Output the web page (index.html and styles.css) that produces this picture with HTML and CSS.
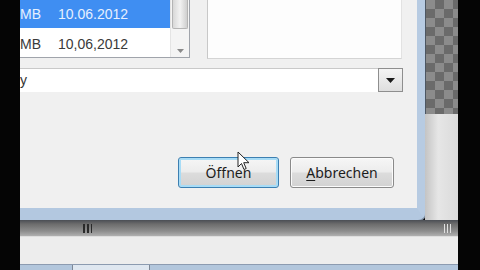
FILE: index.html
```html
<!DOCTYPE html>
<html lang="de">
<head>
    <meta charset="UTF-8">
    <title>Öffnen</title>
    <link rel="stylesheet" href="styles.css">
</head>
<body>
    <div class="edge-left"></div>
    <div class="screen">
        <div class="top">
            <div class="dialog">
                <div class="dialog-body">
                    <div class="panes">
                        <div class="file-list">
                            <div class="rows">
                                <div class="row selected"><span class="size">MB</span><span class="date">10.06.2012</span></div>
                                <div class="row"><span class="size">MB</span><span class="date">10,06,2012</span></div>
                            </div>
                            <div class="scrollbar">
                                <div class="thumb"></div>
                                <div class="arrow-down">
                                    <svg width="7" height="4" viewBox="0 0 7 4"><path d="M0 0h7L3.5 4z" fill="#8a8a8a"/></svg>
                                </div>
                            </div>
                        </div>
                        <div class="preview"></div>
                    </div>
                    <div class="filter">
                        <div class="filter-input">y</div>
                        <div class="filter-btn">
                            <svg width="9" height="5" viewBox="0 0 9 5"><path d="M0 0h9L4.5 5z" fill="#1a1a1a"/></svg>
                        </div>
                    </div>
                    <div class="actions">
                        <button class="btn default">Öffnen</button>
                        <button class="btn"><u>A</u>bbrechen</button>
                    </div>
                </div>
            </div>
            <div class="side">
                <div class="checker"></div>
                <div class="side-gray"></div>
            </div>
        </div>
        <div class="hscroll">
            <div class="grip"></div>
            <div class="grip right"></div>
        </div>
        <div class="pane-bottom"></div>
        <div class="tabs">
            <div class="tab"></div>
        </div>
    </div>
    <div class="edge-right"></div>

    <!-- mauszeiger -->
    <svg class="cursor" width="13" height="20" viewBox="0 0 13 20">
        <path d="M1 1v15l3.5-3.5 2.5 6 2.2-1-2.5-5.8H12z" fill="#fff" stroke="#222" stroke-width="1"/>
    </svg>
</body>
</html>
```

FILE: styles.css
```css
body {
    margin: 0;
    padding: 0;
    width: 480px;
    height: 270px;
    overflow: hidden;
    background: black;
    display: flex;
    font-family: "Liberation Sans", Arial, sans-serif;
    position: relative;
}

.edge-left {
    width: 20px;
    background: #050505;
}

.edge-right {
    width: 22px;
    background: #050505;
}

.screen {
    width: 438px;
    display: flex;
    flex-direction: column;
}

.top {
    display: flex;
    height: 220px;
}

/*fenster vom dialog*/
.dialog {
    width: 397px;
    height: 208px;
    border-right: 8px solid #b7cbe2;
    border-bottom: 12px solid #b3c8e0;
    border-bottom-right-radius: 7px;
    box-shadow: 1px 1px 0 #7f8ea0;
    background: #f0f0f0;
}

.dialog-body {
    height: 208px;
    display: flex;
    flex-direction: column;
}

.panes {
    display: flex;
    height: 60px;
}

.file-list {
    width: 169px;
    height: 57px;
    display: flex;
    background: white;
    border-right: 1px solid #a0a4ab;
    border-bottom: 1px solid #a0a4ab;
}

.rows {
    flex: 1;
    overflow: hidden;
}

.row {
    height: 29px;
    display: flex;
    align-items: center;
    font-size: 14px;
    color: #3a3a3a;
}

.row.selected {
    height: 28px;
    background: #3f8ef2;
    color: #e6f0ff;
    margin-bottom: 1px;
}

.size {
    width: 38px;
}

.scrollbar {
    width: 18px;
    display: flex;
    flex-direction: column;
    align-items: center;
    background: #f4f4f4;
    border-left: 1px solid #e4e4e4;
}

.thumb {
    width: 16px;
    height: 33px;
    border: 1px solid #b4b4b4;
    border-top: none;
    border-radius: 0 0 2px 2px;
    background: linear-gradient(to right, #d8d8d8, #f2f2f2 50%, #cfcfcf);
    box-sizing: border-box;
}

.arrow-down {
    margin-top: 10px;
}

.preview {
    margin-left: 17px;
    width: 193px;
    height: 58px;
    border-left: 1px solid #c8c8c8;
    border-right: 1px solid #e2e2e2;
    border-bottom: 1px solid #d4d4d4;
    background: #fdfdfd;
}

/*dateityp auswahl*/
.filter {
    display: flex;
    margin-top: 8px;
    height: 24px;
}

.filter-input {
    width: 358px;
    height: 23px;
    background: white;
    border-top: 1px solid #c9c9c9;
    font-size: 14px;
    color: #333;
    line-height: 22px;
}

.filter-btn {
    width: 23px;
    height: 22px;
    border: 1px solid #8e8e8e;
    background: linear-gradient(#f4f4f4, #dedede);
    display: flex;
    align-items: center;
    justify-content: center;
}

.actions {
    display: flex;
    justify-content: flex-end;
    gap: 11px;
    margin-top: 65px;
    padding-right: 23px;
}

.btn {
    width: 104px;
    height: 31px;
    border: 1px solid #8a8a8a;
    border-radius: 3px;
    background: linear-gradient(#f6f6f6, #ececec 48%, #dcdcdc 52%, #d2d2d2);
    box-shadow: inset 0 0 0 1px #fbfbfb;
    font-family: "Noto Sans", "Liberation Sans", sans-serif;
    font-size: 14px;
    color: #1c1c1c;
    padding: 0;
}

.btn.default {
    width: 101px;
    border-color: #3c7fb1;
    box-shadow: inset 0 0 0 2px #a8dcf6;
}

.btn u {
    text-underline-offset: 2px;
}

/*bereich rechts vom dialog*/
.side {
    width: 33px;
    display: flex;
    flex-direction: column;
}

.checker {
    height: 114px;
    background-color: #8b8b8b;
    background-image: conic-gradient(#6a6a6a 25%, transparent 0 50%, #6a6a6a 0 75%, transparent 0);
    background-size: 18px 18px;
    border-left: 1px solid #4c5662;
}

.side-gray {
    flex: 1;
    background: linear-gradient(to right, #c4c4c4, #e6e6e6 40%, #dadada);
}

/*leiste unter dem dialog*/
.hscroll {
    height: 16px;
    display: flex;
    justify-content: space-between;
    align-items: center;
    background: linear-gradient(#4a4e54, #6c6c6c 25%, #8e8e8e 70%, #b0b0b0);
}

.grip {
    width: 9px;
    height: 9px;
    margin-left: 63px;
    background: repeating-linear-gradient(to right, #2a2a2a 0 2px, transparent 2px 4px);
}

.grip.right {
    margin-left: 0;
    margin-right: 5px;
    background: repeating-linear-gradient(to right, #e0e0e0 0 1px, transparent 1px 3px);
}

.pane-bottom {
    height: 27px;
    background: #ededed;
    border-top: 1px solid #dedede;
}

.tabs {
    flex: 1;
    display: flex;
    background: #b2c6dc;
    border-top: 1px solid #8c9bb0;
}

.tab {
    margin-left: 52px;
    width: 76px;
    background: #dfe7f0;
    border-left: 1px solid #7d8796;
    border-right: 1px solid #7d8796;
}

.cursor {
    position: absolute;
    left: 237px;
    top: 151px;
}
```
